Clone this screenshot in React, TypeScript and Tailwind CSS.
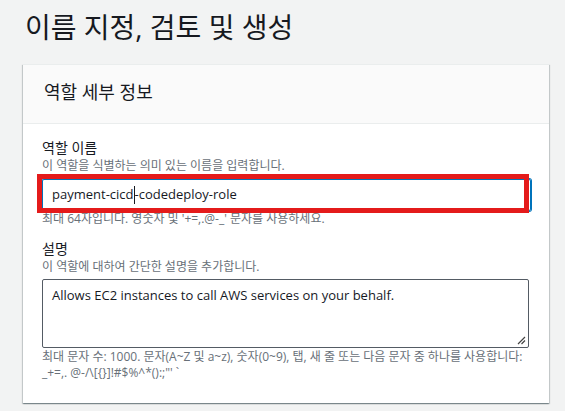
const KR = "font-['Open_Sans','Noto_Sans_CJK_KR',sans-serif]";

function Field({ label, hint, children }: { label: string; hint: string; children: React.ReactNode }) {
  return (
    <div>
      <div className="text-[14px] leading-[18px] text-[#16191f]">{label}</div>
      <div className="text-[12px] leading-[16px] text-[#687078] mt-[1px]">{hint}</div>
      {children}
    </div>
  );
}

export default function App() {
  return (
    <div className={`${KR} w-[565px] h-[411px] bg-[#f2f3f3] overflow-hidden`}>
      <h1 className="pl-[25px] pt-[10px] text-[28px] leading-[34px] text-[#16191f] font-normal">
        이름 지정, 검토 및 생성
      </h1>

      <div className="ml-[23px] mt-[20px] w-[526px] bg-white border-t border-[#eaeded] shadow-[0_1px_1px_0_rgba(0,28,36,0.3),1px_1px_1px_0_rgba(0,28,36,0.15),-1px_1px_1px_0_rgba(0,28,36,0.15)]">
        {/* Header */}
        <div className="bg-[#fafafa] border-b border-[#eaeded] h-[59px] pt-[16px] px-[21px]">
          <h2 className="text-[18px] leading-[22px] text-[#16191f] font-normal">역할 세부 정보</h2>
        </div>

        {/* Body */}
        <div className="px-[19px] pt-[15px] pb-[22px]">
          <Field label="역할 이름" hint="이 역할을 식별하는 의미 있는 이름을 입력합니다.">
            <div className="relative mt-[5px]">
              <div className="h-[32px] w-[489px] border border-[#0073bb] rounded-[2px] shadow-[0_0_0_1px_#0073bb] flex items-center pl-[9px] text-[13px] text-[#16191f]">
                <span>payment-cicd</span>
                <span className="w-px h-[18px] bg-[#16191f]" />
                <span>-codedeploy-role</span>
              </div>
              {/* red annotation box */}
              <div className="absolute left-[-5px] top-[-5px] w-[492px] h-[39px] border-[5px] border-[#e41b1b]" />
            </div>
            <div className="text-[12px] leading-[16px] text-[#687078]">
              최대 64자입니다. 영숫자 및 '+=,.@-_' 문자를 사용하세요.
            </div>
          </Field>

          <div className="mt-[13px]">
            <Field label="설명" hint="이 역할에 대하여 간단한 설명을 추가합니다.">
              <div className="relative mt-[4px] h-[69px] w-[487px] border border-[#545b64] rounded-[2px] pl-[9px] pt-[5px] text-[13px] leading-[20px] text-[#16191f]">
                Allows EC2 instances to call AWS services on your behalf.
                <svg className="absolute right-[2px] bottom-[2px]" width="9" height="9" viewBox="0 0 9 9">
                  <path d="M8 1 L1 8 M8 4.5 L4.5 8" stroke="#444" strokeWidth="1.2" />
                </svg>
              </div>
              <div className="text-[12px] leading-[16px] text-[#687078] mt-[1px]">
                최대 문자 수: 1000. 문자(A~Z 및 a~z), 숫자(0~9), 탭, 새 줄 또는 다음 문자 중 하나를 사용합니다:
                <br />
                _+=,. @-/\[{'{'}{'}'}]!#$%^*():;"' `
              </div>
            </Field>
          </div>
        </div>
      </div>
    </div>
  );
}
